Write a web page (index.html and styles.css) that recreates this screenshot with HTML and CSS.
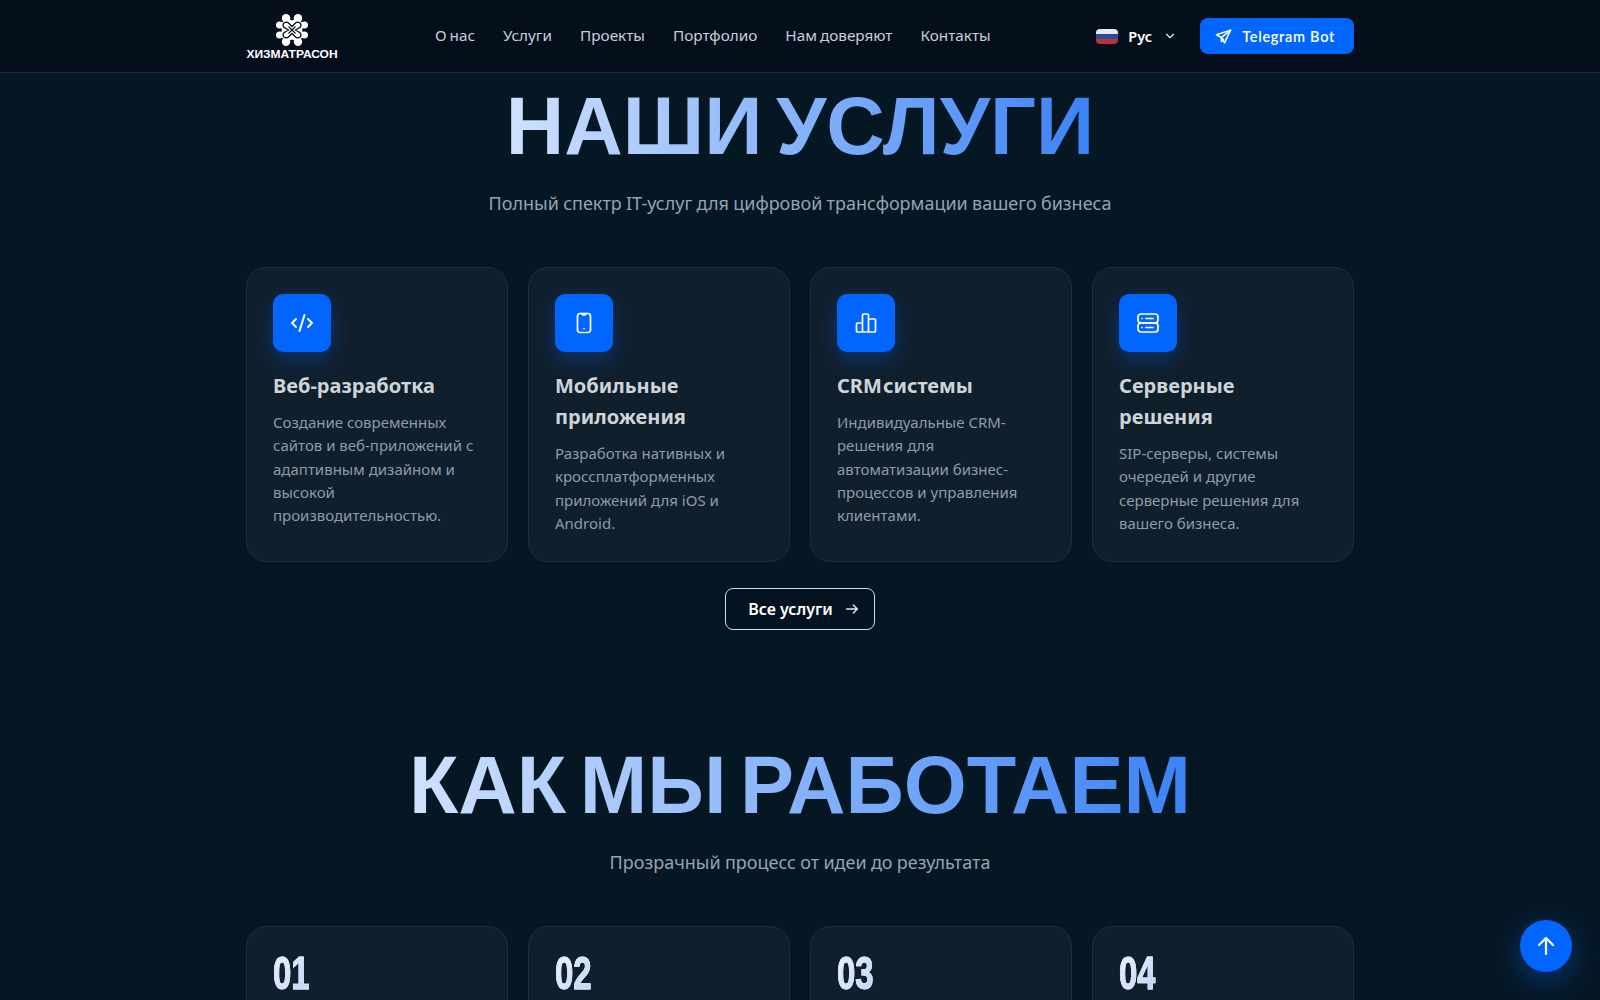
FILE: index.html
```
<!DOCTYPE html>
<html lang="ru">
<head>
<meta charset="utf-8">
<title>Хизматрасон</title>
<link rel="stylesheet" href="styles.css">
</head>
<body>
<header class="header">
  <div class="header-inner">
    <a class="logo">
      <svg class="logo-mark" viewBox="0 0 32 32" width="32" height="32" fill="none">
        <g fill="#fff">
          <circle cx="10" cy="4.200" r="4.200"/><circle cx="22" cy="4.200" r="4.200"/>
          <circle cx="10" cy="27.800" r="4.200"/><circle cx="22" cy="27.800" r="4.200"/>
          <circle cx="3.600" cy="11" r="3.600"/><circle cx="28.400" cy="11" r="3.600"/>
          <circle cx="3.600" cy="21" r="3.600"/><circle cx="28.400" cy="21" r="3.600"/>
          <path d="M10 4l6 2.500L22 4l6 7-2 5 2 5-6 7-6-2.500L10 28l-6-7 2-5-2-5z"/>
        </g>
        <path d="M16 12.500L12.500 9C10.500 7 7 8.500 7 11c0 2 1.500 3 3 3.500l2.500 1.500-2.500 1.500C8.500 18 7 19 7 21c0 2.500 3.500 4 5.500 2l3.500-3.500 3.500 3.500c2 2 5.500.5 5.500-2 0-2-1.500-3-3-3.500L19.500 16l2.500-1.500c1.500-.5 3-1.500 3-3.500 0-2.500-3.500-4-5.500-2z" stroke="#050f1b" stroke-width="1.300"/>
        <path d="M12.500 12.500l7 7M19.500 12.500l-7 7" stroke="#050f1b" stroke-width="1.100"/>
      </svg>
      <span class="logo-text">ХИЗМАТРАСОН</span>
    </a>
    <nav class="nav">
      <a>О нас</a><a>Услуги</a><a>Проекты</a><a>Портфолио</a><a>Нам доверяют</a><a>Контакты</a>
    </nav>
    <div class="actions">
      <div class="lang">
        <span class="flag"><i class="w"></i><i class="b"></i><i class="r"></i></span>
        <span class="lang-name">Рус</span>
        <svg class="chev" viewBox="0 0 24 24" width="14" height="14" fill="none" stroke="#e5edf5" stroke-width="2" stroke-linecap="round" stroke-linejoin="round"><path d="M6 9l6 6 6-6"/></svg>
      </div>
      <a class="tg">
        <svg viewBox="0 0 24 24" width="17" height="17" fill="none" stroke="#fff" stroke-width="2.200" stroke-linecap="round" stroke-linejoin="round"><path d="M22 3L2 9.500l7 4L13.500 21z"/><path d="M22 3L9 13.500V19l3-3"/></svg>
        Telegram Bot
      </a>
    </div>
  </div>
</header>
<main class="main">
  <section class="section">
    <h2 class="title">НАШИ УСЛУГИ</h2>
    <p class="sub">Полный спектр IT-услуг для цифровой трансформации вашего бизнеса</p>
    <div class="grid">
      <article class="card">
        <div class="ico"><svg viewBox="0 0 24 24" width="24" height="24" fill="none" stroke="#fff" stroke-width="2" stroke-linecap="round" stroke-linejoin="round"><path d="M6 8l-4 4 4 4M18 8l4 4-4 4M14.500 4l-5 16"/></svg></div>
        <h3>Веб-разработка</h3>
        <p>Создание современных сайтов и веб-приложений с адаптивным дизайном и высокой производительностью.</p>
      </article>
      <article class="card">
        <div class="ico"><svg viewBox="0 0 24 24" width="24" height="24" fill="none" stroke="#fff" stroke-width="1.700" stroke-linecap="round" stroke-linejoin="round"><path d="M8 2.500h8a2.500 2.500 0 0 1 2.500 2.500v14a2.500 2.500 0 0 1-2.500 2.500H8A2.500 2.500 0 0 1 5.500 19V5A2.500 2.500 0 0 1 8 2.500z"/><path d="M10 2.500l.6 1.500h2.800l.6-1.500M12 17.500h.01"/></svg></div>
        <h3>Мобильные приложения</h3>
        <p>Разработка нативных и кроссплатформенных приложений для iOS и Android.</p>
      </article>
      <article class="card">
        <div class="ico"><svg viewBox="0 0 24 24" width="24" height="24" fill="none" stroke="#fff" stroke-width="1.700" stroke-linecap="round" stroke-linejoin="round"><path d="M8.500 21V4a1 1 0 0 1 1-1h4a1 1 0 0 1 1 1v17M14.500 8h6a1 1 0 0 1 1 1v11a1 1 0 0 1-1 1H3.500a1 1 0 0 1-1-1v-7a1 1 0 0 1 1-1h5"/></svg></div>
        <h3>CRM системы</h3>
        <p>Индивидуальные CRM-решения для автоматизации бизнес-процессов и управления клиентами.</p>
      </article>
      <article class="card">
        <div class="ico"><svg viewBox="0 0 24 24" width="24" height="24" fill="none" stroke="#fff" stroke-width="1.700" stroke-linecap="round" stroke-linejoin="round"><rect x="2" y="3" width="20" height="9" rx="3"/><rect x="2" y="12" width="20" height="9" rx="3"/><path d="M6 7.500h.01M6 16.500h.01M10 7.500h7M10 16.500h7"/></svg></div>
        <h3>Серверные решения</h3>
        <p>SIP-серверы, системы очередей и другие серверные решения для вашего бизнеса.</p>
      </article>
    </div>
    <div class="more-row">
      <a class="more">Все услуги
        <svg viewBox="0 0 24 24" width="16" height="16" fill="none" stroke="#e6ecf2" stroke-width="2" stroke-linecap="round" stroke-linejoin="round"><path d="M4 12h16M14 6l6 6-6 6"/></svg>
      </a>
    </div>
  </section>
  <section class="section second">
    <h2 class="title">КАК МЫ РАБОТАЕМ</h2>
    <p class="sub">Прозрачный процесс от идеи до результата</p>
    <div class="grid">
      <article class="card step"><div class="num">01</div></article>
      <article class="card step"><div class="num">02</div></article>
      <article class="card step"><div class="num">03</div></article>
      <article class="card step"><div class="num">04</div></article>
    </div>
  </section>
</main>
<a class="top"><svg viewBox="0 0 24 24" width="24" height="24" fill="none" stroke="#fff" stroke-width="2.200" stroke-linecap="round" stroke-linejoin="round"><path d="M12 20V4M5 11l7-7 7 7"/></svg></a>
</body>
</html>
```
FILE: styles.css
```
* { box-sizing: border-box; }
html, body { margin: 0; height: 1000px; overflow: hidden; }
body { background: #061724; color: #fff; font-family: "Noto Sans", sans-serif; }
.header { position: fixed; top: 0; left: 0; right: 0; height: 73px; background: #050f1b; border-bottom: 1px solid #1c2a36; z-index: 5; }
.header-inner { width: 1108px; height: 72px; margin: 0 auto; display: flex; align-items: center; }
.logo { display: flex; flex-direction: column; align-items: center; width: 92px; gap: 4px; }
.logo-mark { display: block; margin-top: 1px; }
.logo-text { font: 700 10px/10px "Liberation Sans", sans-serif; transform: scaleX(1.2); white-space: nowrap; }
.nav { display: flex; gap: 28px; margin-left: 97px; font-size: 15.300px; word-spacing: -1px; color: #c6d0da; margin-top: -2px; }
.actions { margin-left: auto; display: flex; align-items: center; }
.lang { display: flex; align-items: center; margin-right: 23px; }
.flag { width: 22px; height: 15px; border-radius: 4px; overflow: hidden; display: flex; flex-direction: column; }
.flag i { flex: 1; display: block; }
.flag .w { background: #e8e8ee; }
.flag .b { background: #2b4a9a; }
.flag .r { background: #b8323a; }
.lang-name { margin-left: 10px; font: 600 14.500px "Noto Sans", sans-serif; }
.chev { margin-left: 11px; }
.tg { display: flex; align-items: center; gap: 10px; height: 36px; padding: 0 19px 0 15px; background: #0066ff; border-radius: 8px; font: 600 14.500px Lato, sans-serif; letter-spacing: .7px; }
.main { padding-top: 73px; }
.section { width: 1108px; margin: 0 auto; text-align: center; }
.second { margin-top: 102px; }
.title { font: 700 81px/106px "Liberation Sans", sans-serif; word-spacing: -9px; background: linear-gradient(90deg, #d0e2ff, #3b82f6); -webkit-background-clip: text; background-clip: text; color: transparent; width: max-content; margin: 0 auto; }
.sub { margin: 9px 0 0; font-size: 18px; line-height: 30px; word-spacing: -.4px; color: #97a3af; }
.grid { display: grid; grid-template-columns: repeat(4, 1fr); gap: 20px; margin-top: 49px; text-align: left; }
.card { padding: 26px; min-height: 294px; background: #101f2c; border: 1px solid #1e2d39; border-radius: 20px; }
.ico { width: 58px; height: 58px; border-radius: 10px; background: #0066ff; display: flex; align-items: center; justify-content: center; box-shadow: 0 8px 22px rgba(0,102,255,.3); }
.card h3 { margin: 18px 0 0; font-size: 20px; line-height: 31px; font-weight: 700; word-spacing: -4px; color: #cfd4d9; }
.card p { margin: 10px 0 0; font-size: 15px; line-height: 23.250px; color: #8f9ba7; }
.more-row { display: flex; justify-content: center; margin-top: 26px; }
.more { display: flex; align-items: center; gap: 11px; height: 42px; padding: 0 14px 0 22px; border: 1px solid #d5dde5; border-radius: 8px; font-weight: 600; font-size: 16px; background: #051320; }
.step { padding-top: 19px; }
.num { font: 700 47px/54px "Liberation Sans", sans-serif; -webkit-text-stroke: 1px #dbe6fa; transform: scaleX(.7); transform-origin: left; background: linear-gradient(135deg, #f0f5ff, #bcd0f5); -webkit-background-clip: text; background-clip: text; color: transparent; width: max-content; }
.top { position: fixed; right: 28px; bottom: 28px; width: 52px; height: 52px; border-radius: 50%; background: #0066ff; display: flex; align-items: center; justify-content: center; box-shadow: 0 8px 30px rgba(0,102,255,.4); }
```
